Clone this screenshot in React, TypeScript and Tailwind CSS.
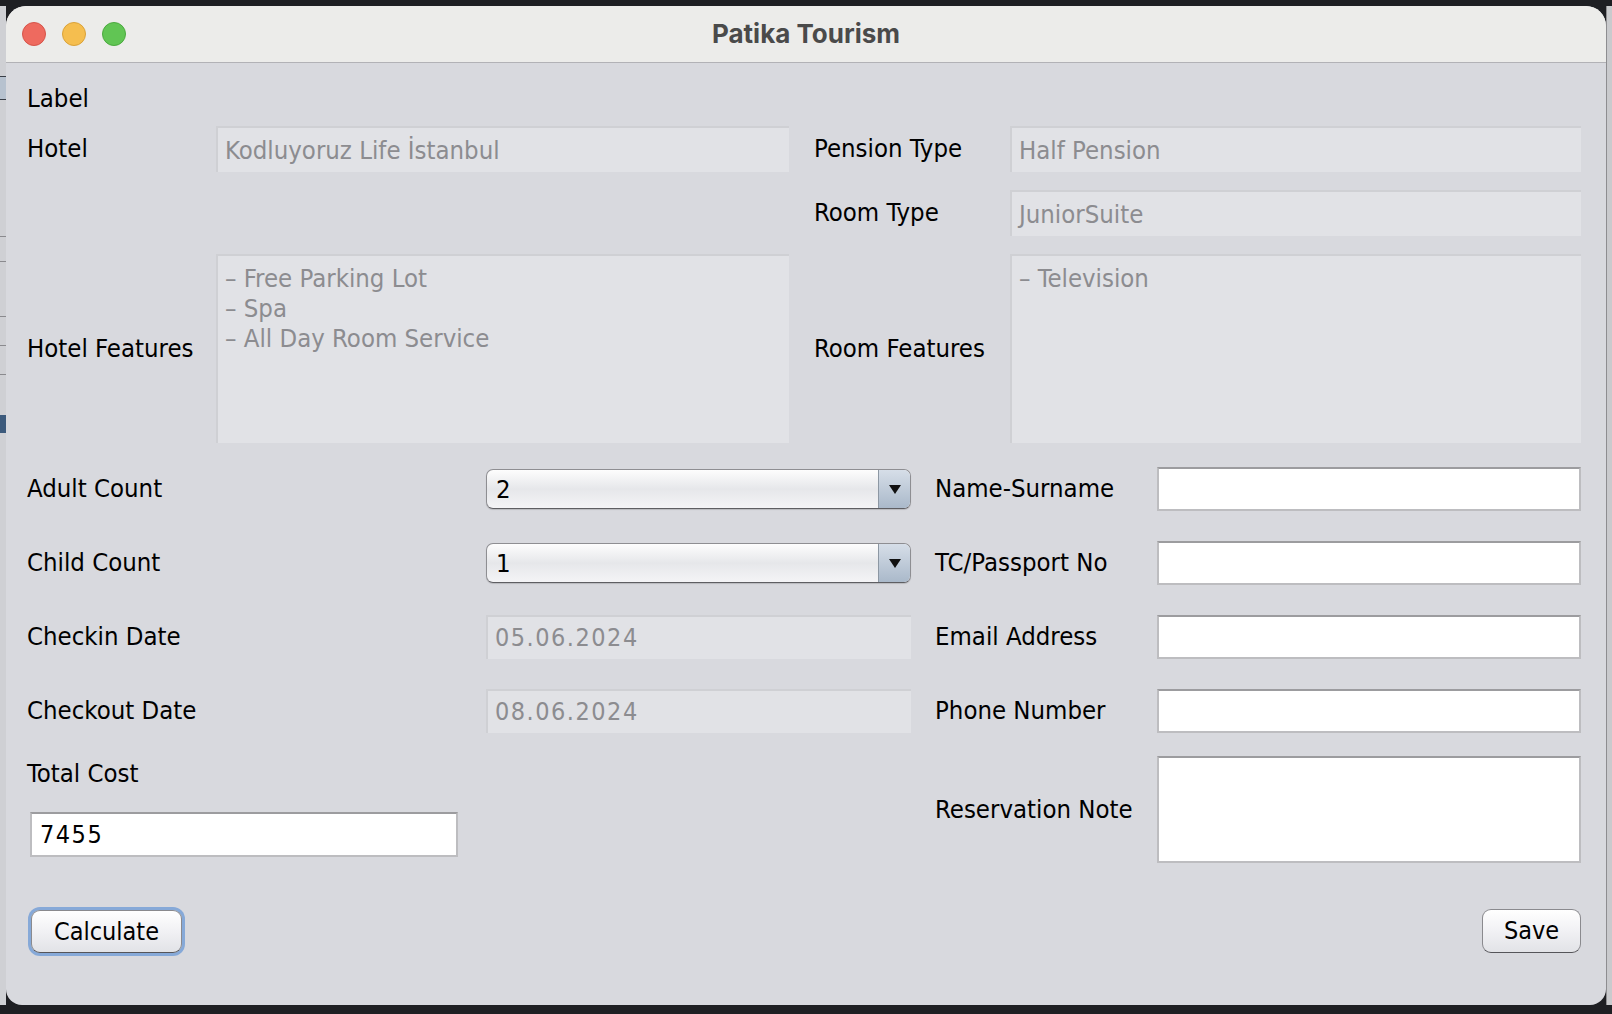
import React from 'react';

const labelFont = { fontFamily: '"DejaVu Sans Condensed", "DejaVu Sans", sans-serif' };

const Label: React.FC<{ text: string }> = ({ text }) => (
    <div className="flex items-center text-[25.5px] text-black leading-none">{text}</div>
);

const DisabledField: React.FC<{ value: string; wide?: boolean; className?: string }> = ({ value, wide, className }) => (
    <div
        className={`flex items-center h-full bg-[#e1e2e6] border-t-2 border-l-2 border-[#cfd0d4] pl-[7px] text-[#8c8c90] ${wide ? 'text-[25px] tracking-[1.5px]' : 'text-[25.5px]'} ${className ?? ''}`}
    >
        {value}
    </div>
);

const WhiteField: React.FC<{ className?: string; children?: React.ReactNode }> = ({ className, children }) => (
    <div className={`bg-white border-2 border-[#bdbdc0] border-t-[#9c9c9f] flex items-center ${className ?? ''}`}>{children}</div>
);

const Combo: React.FC<{ value: string }> = ({ value }) => (
    <div className="flex h-[40px] w-[425px] self-center rounded-[7px] border-[1.5px] border-[#8e8e92] border-b-[#5e5e62] bg-gradient-to-b from-[#fdfdfd] via-[#e6e7ea] to-[#f4f4f6] overflow-hidden shadow-[0_1px_1px_rgba(0,0,0,0.15)]">
        <div className="flex-1 flex items-center pl-[9px] text-[25.5px] text-black">{value}</div>
        <div className="w-[32px] flex items-center justify-center border-l-[1.5px] border-[#8c97a3] bg-gradient-to-b from-[#d6dee8] to-[#aab9ca]">
            <svg width="14" height="11" viewBox="0 0 14 11">
                <path d="M1 1 L13 1 L7 10 Z" fill="#111" />
            </svg>
        </div>
    </div>
);

const Button: React.FC<{ text: string; focused?: boolean; className?: string }> = ({ text, focused, className }) => (
    <div
        className={`flex items-center justify-center rounded-[9px] border-[1.5px] border-[#8a8a8e] border-b-[#555559] bg-gradient-to-b from-[#ffffff] via-[#f1f1f4] to-[#e2e3e7] text-[25px] text-black ${focused ? 'ring-[3px] ring-[#86a9d8]' : ''} ${className ?? ''}`}
    >
        {text}
    </div>
);

const App: React.FC = () => {
    return (
        <div className="w-[1612px] h-[1014px] bg-[#1e1f23] flex overflow-hidden" style={labelFont}>
            {/* background window peeking on the left */}
            <div className="w-[6px] mt-[6px] h-[999px] bg-[#cfd0d4] flex flex-col">
                <div className="h-[10px]" />
                <div className="h-[24px] mt-[60px] bg-[#b7c2cf] border-y border-[#3a3f48]" />
                <div className="h-px mt-[136px] bg-[#8a8a8e]" />
                <div className="h-px mt-[24px] bg-[#8a8a8e]" />
                <div className="h-px mt-[54px] bg-[#8a8a8e]" />
                <div className="h-px mt-[28px] bg-[#8a8a8e]" />
                <div className="h-px mt-[28px] bg-[#8a8a8e]" />
                <div className="h-[18px] mt-[40px] bg-[#3c5a7c]" />
                <div className="flex-1" />
            </div>

            {/* window */}
            <div className="w-[1600px] h-[999px] mt-[6px] rounded-t-[20px] rounded-b-[16px] bg-[#d8d9de] overflow-hidden flex flex-col">
                <div className="h-[57px] shrink-0 bg-[#ececea] border-b border-[#b2b2b6] flex items-center relative">
                    <div className="flex items-center gap-[16px] pl-[16px]">
                        <div className="w-[24px] h-[24px] rounded-full bg-[#ee6a5f] border border-[#d5544a]" />
                        <div className="w-[24px] h-[24px] rounded-full bg-[#f5be4f] border border-[#d9a23a]" />
                        <div className="w-[24px] h-[24px] rounded-full bg-[#61c554] border border-[#4ba93f]" />
                    </div>
                    <div
                        className="absolute inset-0 pb-[2px] flex items-center justify-center text-[26px] font-bold text-[#4a4a4a]"
                        style={{ fontFamily: 'Inter, "Liberation Sans", sans-serif' }}
                    >
                        Patika Tourism
                    </div>
                </div>

                <div className="flex flex-col pl-[21px] pr-[25px] pt-[22px]">
                    <div className="h-[26px] flex items-center text-[25.5px] text-black">Label</div>

                    {/* hotel / room block */}
                    <div className="mt-[15px] grid grid-cols-[189px_598px_196px_571px] grid-rows-[46px_46px_189px] gap-y-[18px]">
                        <Label text="Hotel" />
                        <DisabledField value="Kodluyoruz Life İstanbul" className="w-[573px]" />
                        <Label text="Pension Type" />
                        <DisabledField value="Half Pension" />

                        <div />
                        <div />
                        <Label text="Room Type" />
                        <DisabledField value="JuniorSuite" />

                        <Label text="Hotel Features" />
                        <div className="w-[573px] bg-[#e1e2e6] border-t-2 border-l-2 border-[#cfd0d4] pl-[7px] pt-[7px] text-[25.5px] leading-[30px] text-[#8c8c90]">
                            <div>– Free Parking Lot</div>
                            <div>– Spa</div>
                            <div>– All Day Room Service</div>
                        </div>
                        <Label text="Room Features" />
                        <div className="bg-[#e1e2e6] border-t-2 border-l-2 border-[#cfd0d4] pl-[7px] pt-[7px] text-[25.5px] leading-[30px] text-[#8c8c90]">
                            <div>– Television</div>
                        </div>
                    </div>

                    {/* guest block */}
                    <div className="mt-[24px] grid grid-cols-[459px_449px_222px_424px] auto-rows-[44px] gap-y-[30px]">
                        <Label text="Adult Count" />
                        <Combo value="2" />
                        <Label text="Name-Surname" />
                        <WhiteField />

                        <Label text="Child Count" />
                        <Combo value="1" />
                        <Label text="TC/Passport No" />
                        <WhiteField />

                        <Label text="Checkin Date" />
                        <DisabledField value="05.06.2024" wide className="w-[425px]" />
                        <Label text="Email Address" />
                        <WhiteField />

                        <Label text="Checkout Date" />
                        <DisabledField value="08.06.2024" wide className="w-[425px]" />
                        <Label text="Phone Number" />
                        <WhiteField />
                    </div>

                    {/* cost / note */}
                    <div className="mt-[23px] flex">
                        <div className="w-[908px] flex flex-col">
                            <div className="h-[34px] flex items-center text-[25.5px] text-black">Total Cost</div>
                            <WhiteField className="mt-[22px] ml-[3px] w-[428px] h-[45px] pl-[8px] text-[25px] tracking-[1.5px] text-black">
                                7455
                            </WhiteField>
                        </div>
                        <div className="w-[222px] flex items-center text-[25.5px] text-black">Reservation Note</div>
                        <WhiteField className="w-[424px] h-[107px]" />
                    </div>

                    {/* actions */}
                    <div className="mt-[46px] flex justify-between">
                        <Button text="Calculate" focused className="ml-[4px] w-[151px] h-[43px] mt-px" />
                        <Button text="Save" className="w-[99px] h-[44px]" />
                    </div>
                </div>
            </div>

            {/* background window peeking on the right */}
            <div className="w-[6px] mt-[6px] h-[999px] bg-[#c9cacd] border-l border-[#8d8d90]" />
        </div>
    );
};

export default App;
